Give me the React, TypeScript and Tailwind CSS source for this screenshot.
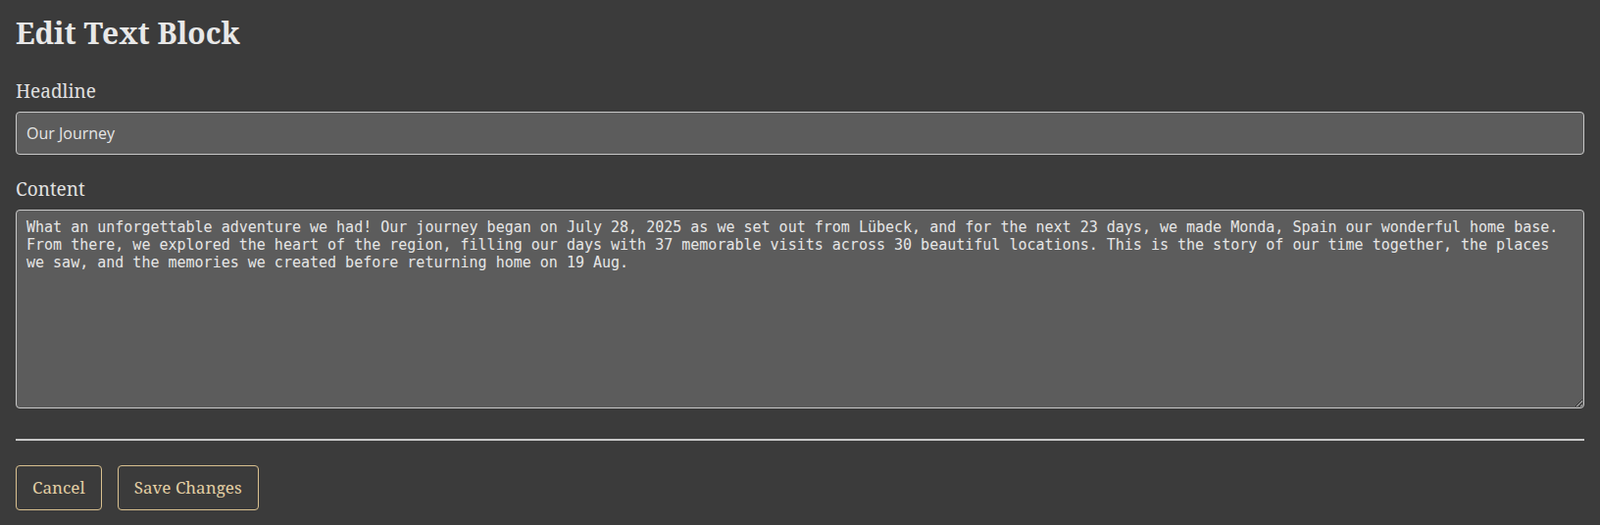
import { useState } from "react";

const serif = "font-['Noto_Serif','DejaVu_Serif',serif]";

const initialContent =
  "What an unforgettable adventure we had! Our journey began on July 28, 2025 as we set out from Lübeck, and for the next 23 days, we made Monda, Spain our wonderful home base. From there, we explored the heart of the region, filling our days with 37 memorable visits across 30 beautiful locations. This is the story of our time together, the places we saw, and the memories we created before returning home on 19 Aug.";

export default function App() {
  const [headline, setHeadline] = useState("Our Journey");
  const [content, setContent] = useState(initialContent);

  return (
    <div className={`min-h-screen bg-[#3b3b3b] px-4 pt-3 text-[#e6e6e6] ${serif}`}>
      <h2 className="text-[30px] leading-[44px] font-bold text-[#e8e8e8]">
        Edit Text Block
      </h2>

      <div className="mt-[23px]">
        <label className="block text-[19px] leading-[28px] text-[#e0e0e0]">
          Headline
        </label>
        <input
          value={headline}
          onChange={(e) => setHeadline(e.target.value)}
          className="mt-[7px] block h-[44px] w-full rounded-[4px] border border-[#c8c8c8] bg-[#5c5c5c] px-[10px] font-['Open_Sans','Noto_Sans',sans-serif] text-[16px] text-[#e6e6e6] outline-none"
        />
      </div>

      <div className="mt-[21px]">
        <label className="block text-[19px] leading-[28px] text-[#e0e0e0]">
          Content
        </label>
        <textarea
          value={content}
          onChange={(e) => setContent(e.target.value)}
          className="mt-[7px] block h-[203px] w-full rounded-[4px] border border-[#c8c8c8] bg-[#5c5c5c] px-[10px] py-[8px] font-['DejaVu_Sans_Mono',monospace] text-[15px] leading-[18px] text-[#e6e6e6] outline-none"
        />
      </div>

      <hr className="mt-[31px] border-t-2 border-[#c8c8c8]" />

      <div className="mt-[25px] flex gap-4">
        <button className="h-[46px] rounded-[4px] border border-[#d9c08f] px-4 text-[17px] text-[#e3cfa4]">
          Cancel
        </button>
        <button className="h-[46px] rounded-[4px] border border-[#d9c08f] px-4 text-[17px] text-[#e3cfa4]">
          Save Changes
        </button>
      </div>
    </div>
  );
}
